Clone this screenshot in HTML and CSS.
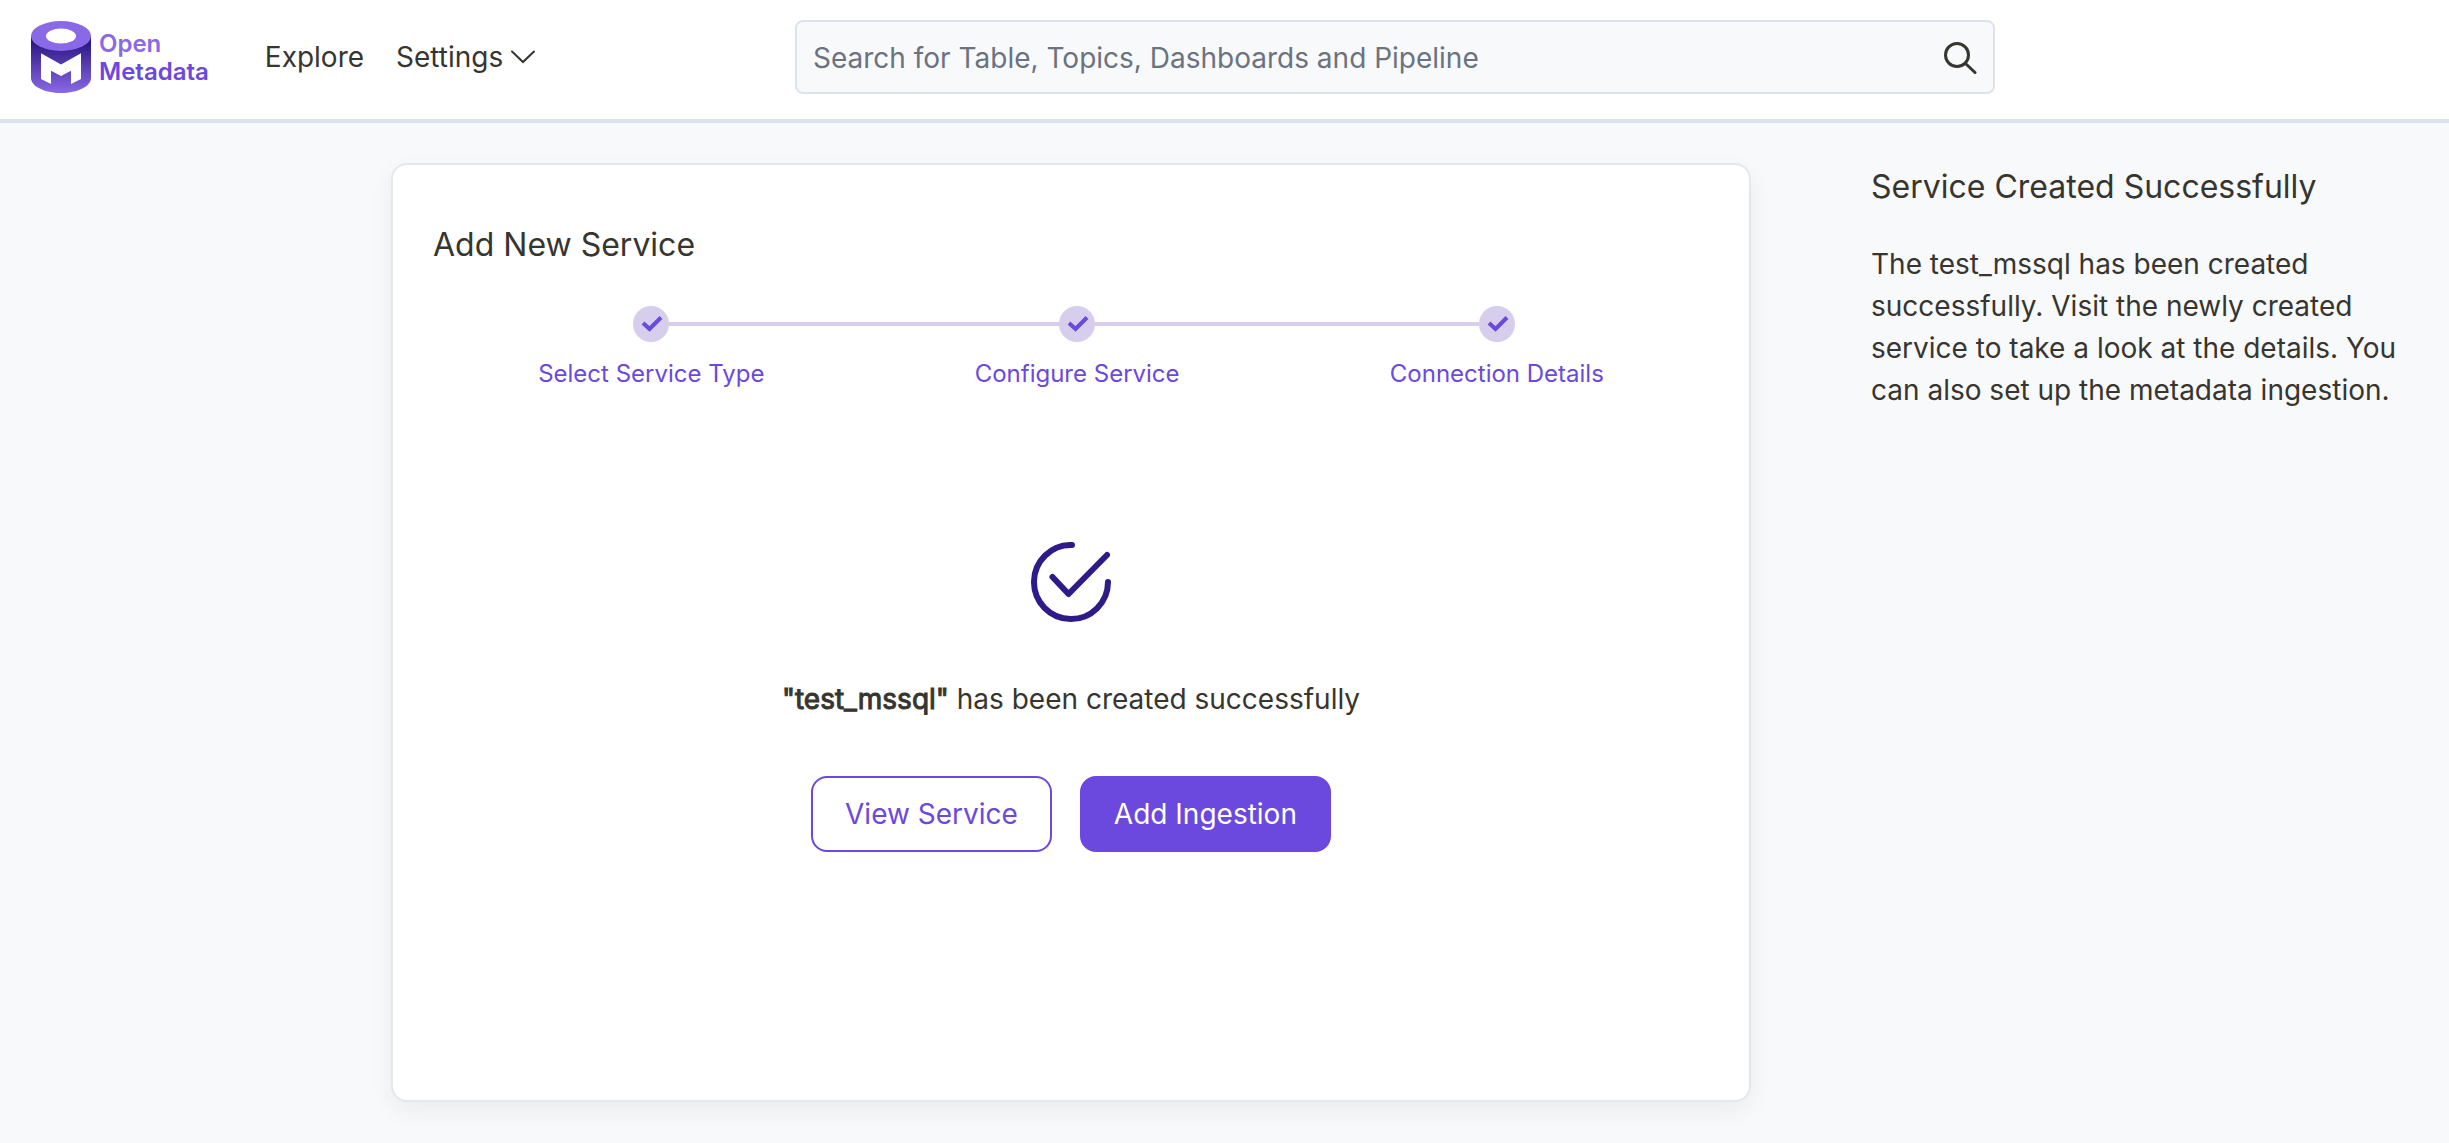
FILE: index.html
```html
<!DOCTYPE html>
<html lang="en">
<head>
<meta charset="utf-8">
<title>Add New Service - OpenMetadata</title>
<meta name="viewport" content="width=device-width, initial-scale=1">
<link rel="stylesheet" href="styles.css">
</head>
<body>
<header class="topbar">
  <div class="topbar-left">
    <a class="brand" href="#">
      <svg class="brand-mark" viewBox="0 0 60 72" aria-hidden="true">
        <defs>
          <linearGradient id="drum" x1="0" y1="0" x2="0" y2="1">
            <stop offset="0.1" stop-color="#2b1884"/>
            <stop offset="1" stop-color="#8a69e6"/>
          </linearGradient>
        </defs>
        <path d="M0 15V57C0 65.300 13.400 72 30 72S60 65.300 60 57V15Z" fill="url(#drum)"/>
        <ellipse cx="30" cy="15" rx="30" ry="15" fill="#8a69e6"/>
        <ellipse cx="30" cy="15" rx="15" ry="7.500" fill="#fff"/>
        <path d="M10 32.300L30 43.500L50 32.300V58L40 63V49.700L30 55L20 49.700V63L10 58Z" fill="#fff"/>
      </svg>
      <span class="brand-name"><span class="brand-open">Open</span><span>Metadata</span></span>
    </a>
    <nav class="nav">
      <a class="nav-item" href="#">Explore</a>
      <button class="nav-item" type="button">Settings
        <svg class="chevron" viewBox="0 0 24 14" aria-hidden="true"><path d="M1 1.500L12 12L23 1.500"/></svg>
      </button>
    </nav>
  </div>
  <form class="search" role="search">
    <input class="search-input" type="search" aria-label="Search" placeholder="Search for Table, Topics, Dashboards and Pipeline">
    <button class="search-button" type="button" aria-label="Search">
      <svg class="search-icon" viewBox="0 0 34 34" aria-hidden="true"><circle cx="14" cy="14" r="11.500"/><path d="M22.500 22.500L32 31.500"/></svg>
    </button>
  </form>
</header>
<main class="layout">
  <section class="card">
    <h1 class="heading">Add New Service</h1>
    <ol class="steps">
      <li class="step">
        <span class="step-marker"><svg class="step-check" viewBox="0 0 36 36" aria-hidden="true"><path d="M10 17L16.500 23L28 11.500"/></svg></span>
        <span>Select Service Type</span>
      </li>
      <li class="step">
        <span class="step-marker"><svg class="step-check" viewBox="0 0 36 36" aria-hidden="true"><path d="M10 17L16.500 23L28 11.500"/></svg></span>
        <span>Configure Service</span>
      </li>
      <li class="step">
        <span class="step-marker"><svg class="step-check" viewBox="0 0 36 36" aria-hidden="true"><path d="M10 17L16.500 23L28 11.500"/></svg></span>
        <span>Connection Details</span>
      </li>
    </ol>
    <div class="result">
      <svg class="result-icon" viewBox="0 0 80 80" aria-hidden="true"><path d="M41 3A37 37 0 1 0 77 40"/><path d="M21.500 35L37.500 52L76 13"/></svg>
      <p class="message"><strong>"test_mssql"</strong> has been created successfully</p>
      <div class="actions">
        <button class="button" type="button">View Service</button>
        <button class="button button-primary" type="button">Add Ingestion</button>
      </div>
    </div>
  </section>
  <aside class="help">
    <h2 class="heading">Service Created Successfully</h2>
    <p class="help-text">The test_mssql has been created successfully. Visit the newly created service to take a look at the details. You can also set up the metadata ingestion.</p>
  </aside>
</main>
</body>
</html>
```
FILE: styles.css
```css
* {
  box-sizing: border-box;
}

body {
  margin: 0;
  min-height: 100vh;
  background: #f8f9fb;
  color: #37352f;
  font: 28px/42px Inter, sans-serif;
}

h1, h2, p, ol {
  margin: 0;
  padding: 0;
}

a {
  color: inherit;
  text-decoration: none;
}

button {
  font: inherit;
  color: inherit;
  cursor: pointer;
}

svg {
  display: block;
  flex: none;
  fill: none;
  stroke-linecap: round;
}

.topbar {
  display: grid;
  grid-template-columns: 795fr 1200fr 454fr;
  align-items: start;
  padding: 20px 0 25px;
  background: #fff;
  border-bottom: 4px solid #dce3ec;
}

.topbar-left {
  display: flex;
  align-items: center;
  gap: 56px;
  padding-top: 1px;
  padding-left: 31px;
}

.brand {
  display: flex;
  align-items: center;
  gap: 8px;
  color: #6b48de;
  font-size: 24px;
  font-weight: 600;
  line-height: 28px;
}

.brand-mark {
  width: 60px;
  height: 72px;
}

.brand-name {
  display: flex;
  flex-direction: column;
  padding-top: 2px;
}

.brand-open {
  color: #8a69e6;
}

.nav {
  display: flex;
  gap: 32px;
}

.nav-item {
  display: flex;
  align-items: center;
  gap: 8px;
  padding: 0;
  border: 0;
  background: none;
}

.chevron {
  width: 24px;
  height: 14px;
  stroke: #37352f;
  stroke-width: 2;
}

.search {
  display: flex;
  align-items: center;
  height: 74px;
  padding: 2px 16px 0;
  background: #f8f9fb;
  border: 2px solid #dce3ec;
  border-radius: 8px;
}

.search-input {
  flex: 1;
  min-width: 0;
  padding: 0;
  border: 0;
  background: none;
  color: inherit;
  font: inherit;
}

.search-input::placeholder {
  color: #6b7280;
  opacity: 1;
}

.search-button {
  padding: 0;
  border: 0;
  background: none;
}

.search-icon {
  width: 34px;
  height: 34px;
  stroke: #37352f;
  stroke-width: 3;
}

.layout {
  display: grid;
  grid-template-columns: 391fr 1360fr 698fr;
  align-items: start;
  padding: 40px 0;
}

.card {
  grid-column: 2;
  padding: 56px 40px 248px;
  background: #fff;
  border: 2px solid #e5e7eb;
  border-radius: 16px;
  box-shadow: 0 8px 24px rgba(0, 0, 0, 0.06);
}

.heading {
  font-size: 32px;
  font-weight: 400;
  line-height: 48px;
}

.steps {
  display: flex;
  margin-top: 37px;
  list-style: none;
  color: #6b48de;
  font-size: 24px;
  line-height: 36px;
}

.step {
  display: flex;
  flex: 1 1 auto;
  flex-direction: column;
  gap: 14px;
  text-align: center;
}

.step-marker {
  display: flex;
  align-items: center;
}

.step-marker::before,
.step-marker::after {
  content: "";
  flex: 1;
  height: 4px;
  background: #d7cdec;
}

.step:first-child .step-marker::before,
.step:last-child .step-marker::after {
  background: none;
}

.step-check {
  width: 36px;
  height: 36px;
  background: #d7cdec;
  border-radius: 50%;
  stroke: #6b48de;
  stroke-width: 4;
  stroke-linecap: butt;
}

.result {
  display: flex;
  flex-direction: column;
  align-items: center;
  margin-top: 150px;
}

.result-icon {
  width: 80px;
  height: 80px;
  stroke: #2f1a89;
  stroke-width: 6;
  stroke-linejoin: round;
}

.message {
  margin-top: 56px;
}

.message strong {
  font-weight: 400;
  -webkit-text-stroke: 1px currentColor;
}

.actions {
  display: flex;
  gap: 28px;
  margin-top: 56px;
}

.button {
  padding: 15px 32px;
  border: 2px solid #6b48de;
  border-radius: 16px;
  background: #fff;
  color: #6b48de;
}

.button-primary {
  background: #6b48de;
  color: #fff;
}

.help {
  padding-left: 120px;
  padding-right: 40px;
}

.help-text {
  margin-top: 32px;
}
```
